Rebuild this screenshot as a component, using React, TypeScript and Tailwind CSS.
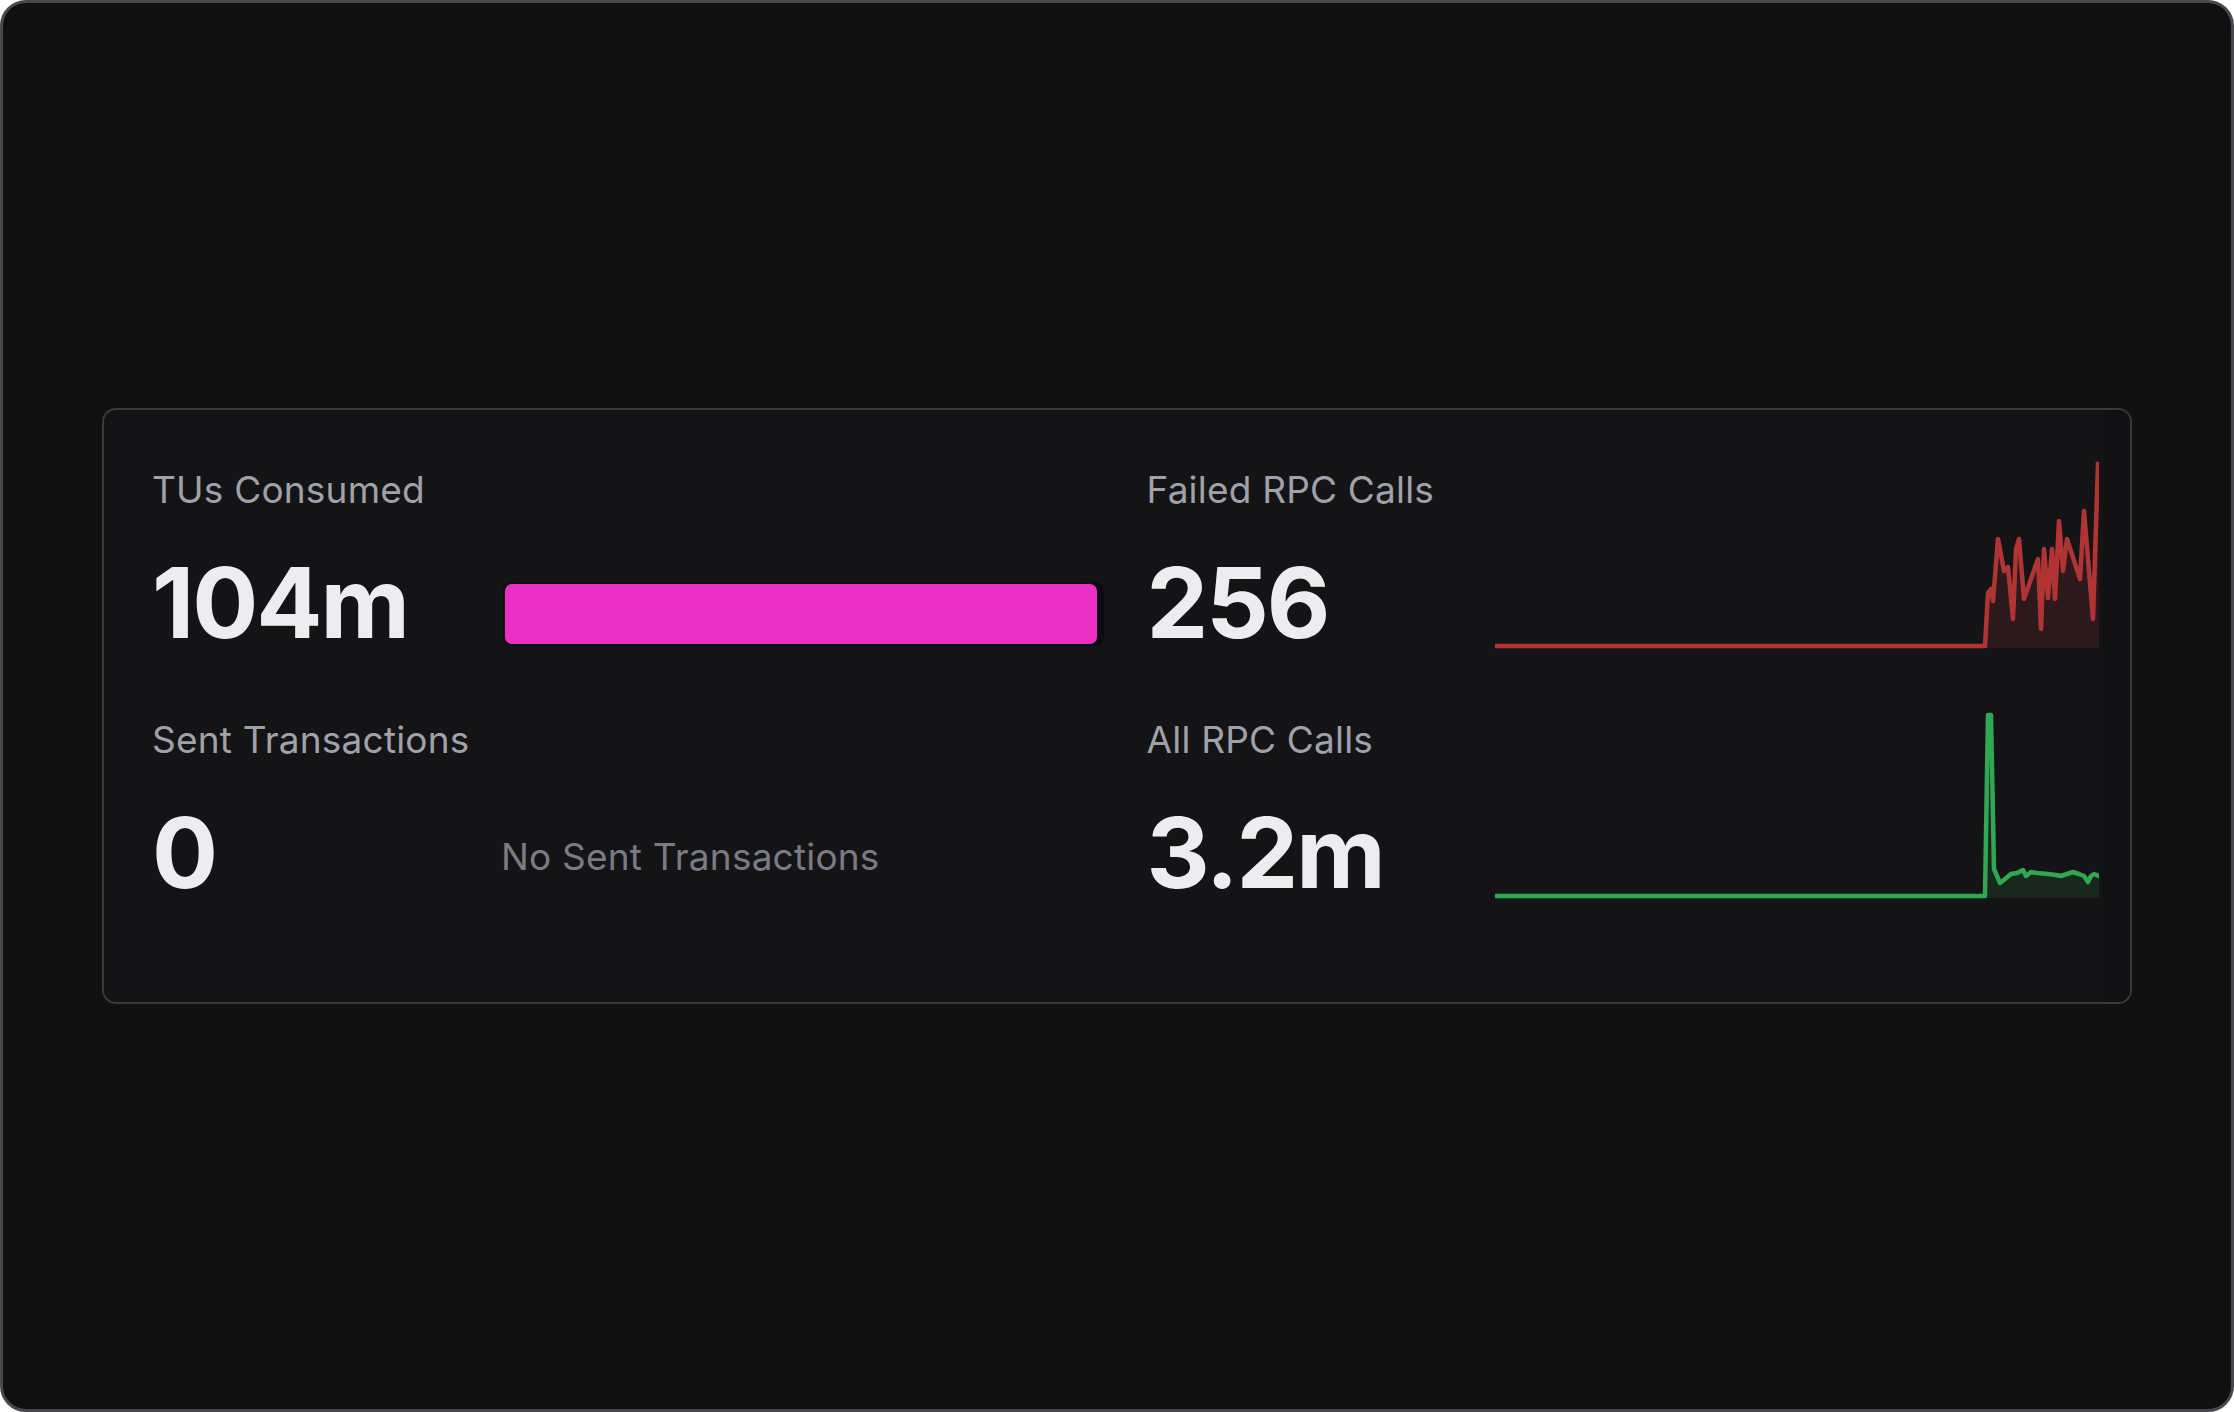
const redLine =
  '0,185 490,185 493,132 496,128 498,140 503,78 509,110 513,106 518,158 521,88 524,78 529,138 543,98 546,168 549,88 553,137 557,88 560,138 564,60 568,110 572,78 585,118 589,50 598,158 603,3'
const greenLine =
  '0,185 490,185 493,4 496,4 499,158 505,172 510,168 516,163 522,162 528,159 531,165 536,161 542,162 553,163 561,164 566,165 572,163 578,161 584,163 589,165 593,171 596,165 599,163 604,165'

function Sparkline({ points, stroke, fill }: { points: string; stroke: string; fill: string }) {
  const area = `${points} 604,187 490,187`
  return (
    <svg className="-mt-[7px] block" width="604" height="190" viewBox="0 0 604 190" fill="none">
      <polygon points={area} fill={fill} />
      <polyline points={points} stroke={stroke} strokeWidth="4.5" strokeLinejoin="round" strokeLinecap="square" />
    </svg>
  )
}

function Stat({ label, value, children }: { label: string; value: string; children: React.ReactNode }) {
  return (
    <div className="flex h-[184px]">
      <div className="flex w-[348px] shrink-0 flex-col">
        <div className="h-[44px] text-[37px] leading-[44px] tracking-[0.2px] text-[#a1a1aa]">{label}</div>
        <div className="mt-[42px] text-[98px] font-bold leading-[98px] tracking-[-2px] text-[#ededef]">{value}</div>
      </div>
      <div className="flex min-w-0 flex-1 flex-col">{children}</div>
    </div>
  )
}

export default function App() {
  return (
    <div className="h-screen w-screen bg-white" style={{ fontFamily: 'Inter, "Liberation Sans", sans-serif' }}>
      <div className="flex h-full items-center justify-center rounded-[26px] border-[3px] border-[#48484f] bg-[#101010]">
        <div className="flex h-[596px] w-[2030px] overflow-hidden rounded-[14px] border-2 border-[#38383d] bg-[#141417]">
          <div className="grid flex-1 grid-cols-2 content-start gap-x-[43px] gap-y-[66px] pl-[48px] pr-[5px] pt-[58px]">
            <Stat label="TUs Consumed" value="104m">
              <div className="flex flex-1 flex-col justify-end pb-[6px] pl-[3px]">
                <div className="h-[64px] rounded-[9px] bg-[#0b0b10] p-[2px] pr-[7px]">
                  <div className="h-full w-full rounded-[7px] bg-[#ec2fc5]" />
                </div>
              </div>
            </Stat>
            <Stat label="Failed RPC Calls" value="256">
              <Sparkline points={redLine} stroke="#b13434" fill="#2b191b" />
            </Stat>
            <Stat label="Sent Transactions" value="0">
              <div className="flex flex-1 items-end pb-[23px] pl-[1px]">
                <span className="text-[37px] leading-[44px] tracking-[0.2px] text-[#7b7b83]">No Sent Transactions</span>
              </div>
            </Stat>
            <Stat label="All RPC Calls" value="3.2m">
              <Sparkline points={greenLine} stroke="#30a852" fill="#1a271f" />
            </Stat>
          </div>
          <div className="w-[27px] shrink-0 bg-[#111113]" />
        </div>
      </div>
    </div>
  )
}
